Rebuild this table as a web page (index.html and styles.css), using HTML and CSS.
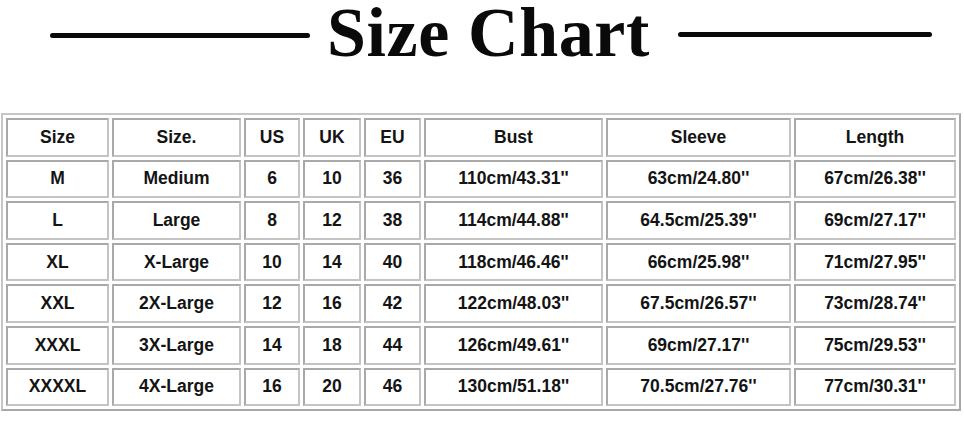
FILE: index.html
```html
<!DOCTYPE html>
<html>
<head>
<meta charset="utf-8">
<link rel="stylesheet" href="styles.css">
</head>
<body>
<div class="page">
  <header class="title-row">
    <span class="rule rule-left"></span>
    <h1 class="title">Size Chart</h1>
    <span class="rule rule-right"></span>
  </header>
  <table class="chart">
    <colgroup>
      <col class="c-size"><col class="c-size2"><col class="c-us"><col class="c-uk"><col class="c-eu"><col class="c-bust"><col class="c-sleeve"><col class="c-length">
    </colgroup>
    <tr><th>Size</th><th>Size.</th><th>US</th><th>UK</th><th>EU</th><th>Bust</th><th>Sleeve</th><th>Length</th></tr>
    <tr><td>M</td><td>Medium</td><td>6</td><td>10</td><td>36</td><td>110cm/43.31''</td><td>63cm/24.80''</td><td>67cm/26.38''</td></tr>
    <tr><td>L</td><td>Large</td><td>8</td><td>12</td><td>38</td><td>114cm/44.88''</td><td>64.5cm/25.39''</td><td>69cm/27.17''</td></tr>
    <tr><td>XL</td><td>X-Large</td><td>10</td><td>14</td><td>40</td><td>118cm/46.46''</td><td>66cm/25.98''</td><td>71cm/27.95''</td></tr>
    <tr><td>XXL</td><td>2X-Large</td><td>12</td><td>16</td><td>42</td><td>122cm/48.03''</td><td>67.5cm/26.57''</td><td>73cm/28.74''</td></tr>
    <tr><td>XXXL</td><td>3X-Large</td><td>14</td><td>18</td><td>44</td><td>126cm/49.61''</td><td>69cm/27.17''</td><td>75cm/29.53''</td></tr>
    <tr><td>XXXXL</td><td>4X-Large</td><td>16</td><td>20</td><td>46</td><td>130cm/51.18''</td><td>70.5cm/27.76''</td><td>77cm/30.31''</td></tr>
  </table>
</div>
</body>
</html>
```
FILE: styles.css
```css
html, body {
  margin: 0;
  padding: 0;
  background: #ffffff;
}
.page {
  width: 964px;
  height: 424px;
  overflow: hidden;
}
.title-row {
  display: flex;
  align-items: flex-start;
  height: 113px;
}
.rule {
  display: block;
  height: 5px;
  background: #0a0a0a;
  border-radius: 3px;
}
.rule-left {
  width: 260px;
  margin-left: 50px;
  margin-top: 33px;
}
.rule-right {
  width: 254px;
  margin-left: 28px;
  margin-top: 32px;
}
.title {
  margin: 0 0 0 17px;
  font-family: "Liberation Serif", "DejaVu Serif", serif;
  font-weight: bold;
  font-size: 70px;
  line-height: 66px;
  color: #0a0a0a;
  letter-spacing: 0.6px;
}
.chart {
  margin-left: 1px;
  width: 960px;
  table-layout: fixed;
  border-collapse: separate;
  border-spacing: 3px;
  border: 2px solid #c6c6c6;
  border-right-color: #a8a8a8;
  border-bottom-color: #a8a8a8;
  font-family: "Liberation Sans", Arial, sans-serif;
  font-weight: bold;
  font-size: 17.5px;
  color: #141414;
}
.chart th, .chart td {
  height: 34.6px;
  padding: 0;
  text-align: center;
  vertical-align: middle;
  border: 2px solid #c4c4c4;
  border-top-color: #a9a9a9;
  border-left-color: #a9a9a9;
  font-weight: bold;
}
.c-size { width: 103px; }
.c-size2 { width: 129px; }
.c-us { width: 56px; }
.c-uk { width: 58px; }
.c-eu { width: 57px; }
.c-bust { width: 179px; }
.c-sleeve { width: 185px; }
.c-length { width: 162px; }
```
